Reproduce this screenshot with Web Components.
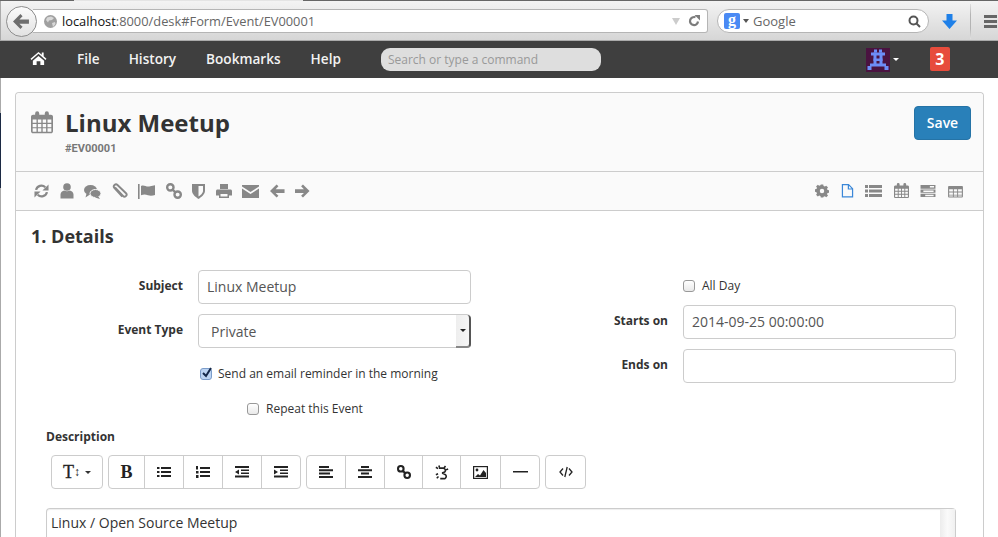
<!DOCTYPE html>
<html><head><meta charset="utf-8">
<style>
html,body{margin:0;padding:0;height:537px;overflow:hidden;background:#fff;font-family:"Open Sans",sans-serif;color:#333}
</style></head><body>
<browser-bar></browser-bar>
<app-nav></app-nav>
<form-page></form-page>
<script>
const ic={
sync:'<g fill="none" stroke="currentColor" stroke-width="2.400"><path d="M2.200 6.800a5.800 5.800 0 0 1 9.800-2.800"/><path d="M13.800 9.200a5.800 5.800 0 0 1-9.800 2.800"/></g><path d="M15.500 1v6.500H9zM.5 15V8.500H7z"/>',
user:'<circle cx="7" cy="4" r="3.800"/><path d="M.5 15.500v-4C.5 9 2.500 8 4.200 7.500c1.300 1 4.300 1 5.600 0C11.500 8 13.500 9 13.500 11.500v4z"/>',
chat:'<ellipse cx="6.500" cy="6" rx="6.500" ry="5"/><path d="M2.500 9.500L1.500 13.500l4.500-3z"/><ellipse cx="11.500" cy="9.500" rx="5.500" ry="4" stroke="#fafafa"/><path d="M14 12l2 3-5-1.500z"/>',
clip:'<path fill="none" stroke="currentColor" stroke-width="1.900" d="M3 4.500l8 8.500a2 2 0 0 0 3-2.800L5.500 2a2.200 2.200 0 0 0-3.200 3l8 8.500"/>',
flag:'<rect x="0" y="0" width="1.600" height="15"/><path d="M3 2c3-1.500 5 1 8 .5l6-1.200v9.700c-2 .8-5 1-7 .3-2.500-.8-4-1-7 0z"/>',
link:'<g fill="none" stroke="currentColor" stroke-width="2.400"><rect x="1.200" y="1.200" width="6.300" height="6.300" rx="3"/><rect x="8.500" y="8.500" width="6.300" height="6.300" rx="3"/><path d="M6 6l4 4"/></g>',
shield:'<path fill-rule="evenodd" d="M0 1h13v7c0 3-3.500 6-6.500 8C3.500 14 0 11 0 8zM6.500 3v10.500c2-1 4.500-3.500 4.500-5.500V3z"/>',
print:'<path fill-rule="evenodd" d="M4 1h8v5H4zM1.500 6.500h13c.8 0 1.500.7 1.500 1.500v4.500h-3V15H3v-2.500H0V8c0-.8.7-1.500 1.500-1.500zM4.500 11v2.500h7V11z"/>',
mail:'<path d="M0 2h17v1.500L8.500 9 0 3.500z"/><path d="M0 5.500L8.500 11 17 5.500V15H0z"/>',
left:'<path d="M7 1l2 2-3 3h9.500v4H6l3 3-2 2-7-7z"/>',
right:'<path d="M8.500 1l-2 2 3 3H0v4h9.500l-3 3 2 2 7-7z"/>',
gear:'<path fill-rule="evenodd" d="M6 0h3l.4 2 1.500.6L12.700 1.500 14.800 3.600 13.600 5.200l.6 1.500 1.800.3v3l-1.800.3-.6 1.500 1.200 1.600-2.100 2.100-1.800-1.100-1.500.6L9 16H6l-.4-1.900-1.500-.6-1.700 1.100L.3 12.500l1.100-1.600-.6-1.500L-1 9V6l1.800-.3.600-1.500L.3 2.600 2.400 .5 4.100 1.600l1.500-.6zM7.500 5.300a2.700 2.700 0 1 0 0 5.400 2.700 2.700 0 0 0 0-5.400z"/>',
file:'<path fill="none" stroke="currentColor" stroke-width="1.400" d="M.7.7h7l4.600 4.600v9.500H.7zM7.500 .7v5h5"/>',
list:'<path d="M0 1h3v3H0zM4 1h13v3H4zM0 5.500h3v3H0zM4 5.500h13v3H4zM0 10h3v3H0zM4 10h13v3H4z"/>',
cal:'<path fill-rule="evenodd" d="M1.500 2.500H3V1.500a1.500 1.500 0 0 1 3 0v1h4v-1a1.500 1.500 0 0 1 3 0v1h1.500c.8 0 1.500.7 1.500 1.500v10.500c0 .8-.7 1.500-1.500 1.500h-13C.7 16 0 15.300 0 14.500V4c0-.8.7-1.500 1.500-1.500zM1.200 6v2.300h2.800V6zM5 6v2.300h2.500V6zM8.500 6v2.300H11V6zM12 6v2.300h2.800V6zM1.200 9.200v2.300h2.800V9.200zM5 9.200v2.300h2.500V9.200zM8.500 9.200v2.300H11V9.200zM12 9.200v2.300h2.800V9.200zM1.200 12.400v2.400h2.800v-2.400zM5 12.400v2.400h2.500v-2.400zM8.500 12.400v2.400H11v-2.400zM12 12.400v2.400h2.800v-2.400z"/>',
rows:'<path fill-rule="evenodd" d="M0 1h16v4H0zM10 2.200v1.600h4.500V2.200zM0 6h16v3.500H0zM3 7v1.500h11V7zM0 10.500h16V14H0zM5 11.500V13h9v-1.500z"/>',
grid:'<path fill-rule="evenodd" d="M1 1h14c.6 0 1 .4 1 1v10.500c0 .6-.4 1-1 1H1c-.6 0-1-.4-1-1V2c0-.6.4-1 1-1zM1.200 4.500v2.400h4V4.500zM6.200 4.500v2.400h3.600V4.500zM10.800 4.500v2.400h4V4.500zM1.200 8v2.400h4V8zM6.200 8v2.400h3.600V8zM10.800 8v2.400h4V8zM1.200 11.300v1.200h4v-1.200zM6.200 11.300v1.200h3.600v-1.200zM10.800 11.300v1.200h4v-1.200z"/>',
home:'<path d="M8.500 1L0 8.300l1 1.200L8.500 3 16 9.500l1-1.200-3-2.600V1.500h-2v2.500zM2.500 10.500L8.500 5.300l6 5.200V15h-4v-4h-4v4h-4z"/>'
};
const svg=(n,w,h,vb,c)=>`<svg width="${w}" height="${h}" viewBox="${vb||'0 0 16 16'}" fill="currentColor" style="display:block;color:${c||'inherit'}">${ic[n]}</svg>`;

customElements.define('browser-bar',class extends HTMLElement{constructor(){super();this.attachShadow({mode:'open'}).innerHTML=`<style>
:host{display:flex;align-items:center;height:41px;box-sizing:border-box;background:linear-gradient(#f3f3f3,#d6d6d6);border-top:1px solid #666;border-bottom:1px solid #aaa;padding:1px 0 0 6px;position:relative;box-shadow:inset 1px 0 #aaa}
.tab{position:absolute;left:74px;width:229px;top:-1px;height:1px;background:#e4e4e4}
.back{width:31px;height:31px;border-radius:50%;background:linear-gradient(#fbfbfb,#e2e2e2);border:1px solid #8e8e8e;box-sizing:border-box;display:flex;align-items:center;justify-content:center;color:#6e6e6e;position:relative;z-index:1;margin-right:-4px;flex:none}
.url{width:675px;height:24px;box-sizing:border-box;background:#fff;border:1px solid #b5b5b5;border-left:0;border-radius:0 3px 3px 0;display:flex;align-items:center;font:12.85px/22px "Open Sans",sans-serif;color:#666;padding-left:11px;flex:none}
.url b{font-weight:400;color:#111}
.globe{width:13px;height:13px;margin-right:5px;flex:none;display:block}
.sp{flex:1}
.tri{width:0;height:0;border:4px solid transparent;border-top:7px solid #ccc;border-bottom:0;margin-right:8px}
.rl{margin-right:7px;color:#7c7c7c}
.g{margin-left:9px;width:212px;height:24px;box-sizing:border-box;flex:none;background:#fff;border:1px solid #b5b5b5;border-radius:12px;display:flex;align-items:center;padding-left:6px;font:13px "Open Sans",sans-serif;color:#666}
.gi{width:16px;height:16px;background:#4a8af4;color:#fff;font:700 16px/13px "Liberation Serif",serif;text-align:center;border-radius:2px;flex:none}
.gc{width:0;height:0;border:3px solid transparent;border-top:4px solid #555;border-bottom:0;margin:0 4px 0 3px}
.mag{margin-right:7px;color:#555}
.dl{margin-left:13px;color:#1f80e8;flex:none}
.div{margin-left:13px;width:1px;height:35px;background:linear-gradient(#e0e0e0,#b4b4b4 30%,#b4b4b4 70%,#e0e0e0);flex:none}
.ham{margin-left:13px;width:13px;flex:none;display:flex;flex-direction:column;gap:2px}
.ham i{display:block;height:3px;background:#666}
</style>
<span class="tab"></span>
<div class="back"><svg width="17" height="15" viewBox="0 0 16 14" fill="currentColor"><path d="M7 0l2 2-3 3h9v4H6l3 3-2 2-7-7z"/></svg></div>
<div class="url"><svg class="globe" viewBox="0 0 13 13"><circle cx="6.500" cy="6.500" r="6.500" fill="#a0a0a0"/><path d="M3 2.500l4-1 3 1.500-2 2-3 .5-1 2-2-2.500zM8 8l3-1 .5 2-2.500 3z" fill="#d8d8d8"/></svg><span><b>localhost</b>:8000/desk#Form/Event/EV00001</span><span class="sp"></span><span class="tri"></span>
<svg class="rl" width="12" height="12" viewBox="0 0 12 12" fill="none" stroke="currentColor" stroke-width="2.200"><path d="M10 6.500A4 4 0 1 1 7.500 2.300"/><path fill="currentColor" stroke="none" d="M6.500 0L12 0v5.500z"/></svg></div>
<div class="g"><span class="gi">g</span><span class="gc"></span><span>Google</span><span class="sp"></span>
<svg class="mag" width="13" height="13" viewBox="0 0 13 13" fill="none" stroke="currentColor" stroke-width="2"><circle cx="5.500" cy="5.500" r="4"/><path d="M8.500 8.500l3.500 3.500"/></svg></div>
<svg class="dl" width="15" height="15" viewBox="0 0 15 15" fill="currentColor"><path d="M4.500 0h6v6.500H15L7.500 15 0 6.500h4.500z"/></svg>
<span class="div"></span><span class="ham"><i></i><i></i><i></i></span>`}});

customElements.define('app-nav',class extends HTMLElement{constructor(){super();this.attachShadow({mode:'open'}).innerHTML=`<style>
:host{display:flex;align-items:center;height:37px;background:#3f3f3f;color:#fff;font:600 13.6px "Open Sans",sans-serif;padding-left:30px}
.home{width:17px;margin-right:30px;color:#fff;margin-top:-2px}
a{margin-right:30px;color:#f2f2f2;margin-top:-2px}
a.first{margin-right:29px}
.s{width:220px;height:23px;margin-left:10px;border-radius:9px;background:#dedede;box-sizing:border-box;padding-left:7px;font:400 12px/23px "Open Sans",sans-serif;color:#999}
.av{margin-left:265px;width:24px;height:24px;background:#4a1340;flex:none}
.c{width:0;height:0;border:3px solid transparent;border-top:3px solid #fff;border-bottom:0;margin:0 31px 0 3px}
.b{width:20px;height:24px;border-radius:2px;background:#e74c3c;font:700 16px/24px "Open Sans",sans-serif;text-align:center;margin-top:-1px}
</style>
<span class="home">${svg('home',17,15,'0 0 17 16')}</span><a class="first">File</a><a>History</a><a>Bookmarks</a><a>Help</a>
<div class="s">Search or type a command</div>
<div class="av"><svg width="24" height="24" viewBox="0 0 24 24" fill="#6d8df7" style="display:block"><rect x="8" y="1.500" width="3" height="3"/><rect x="13" y="1.500" width="3" height="3"/><rect x="5" y="4.500" width="14" height="3"/><rect x="7.500" y="4.500" width="3" height="13"/><rect x="13.500" y="4.500" width="3" height="13"/><rect x="7.500" y="10.500" width="9" height="2.500"/><rect x="4" y="15.500" width="16" height="3"/><rect x="1.500" y="18" width="4" height="4"/><rect x="18.500" y="18" width="4" height="4"/></svg></div><span class="c"></span><div class="b">3</div>`}});

customElements.define('tool-icon',class extends HTMLElement{constructor(){super();const n=this.getAttribute('n'),w=this.getAttribute('w')||16,h=this.getAttribute('h')||16,vb=this.getAttribute('vb');this.attachShadow({mode:'open'}).innerHTML=`<style>:host{display:block;flex:none}</style>${svg(n,w,h,vb)}`}});

customElements.define('form-field',class extends HTMLElement{constructor(){super();this.attachShadow({mode:'open'}).innerHTML=`<style>
:host{display:flex;align-items:flex-start;margin-bottom:10px}
label{width:var(--lw);text-align:right;font:700 12px/17px "Open Sans",sans-serif;color:#333;padding-right:15px;padding-top:7px;box-sizing:content-box;flex:none}
.v{width:273px;height:34px;box-sizing:border-box;border:1px solid #ccc;border-radius:4px;background:#fff;font:14px/32px "Open Sans",sans-serif;color:#555;padding-left:8px;position:relative}
:host([select]) .v{padding-left:12px;line-height:34px;border-radius:4px}
.arrow{display:none}
:host([select]) .arrow{display:block;position:absolute;right:-1px;top:0;bottom:-1px;width:15px;background:linear-gradient(90deg,#eee,#f6f6f6);border-right:2px solid #555;border-bottom:2px solid #888;border-radius:0 4px 4px 0;box-sizing:border-box}
.arrow:after{content:"";position:absolute;left:4px;top:14px;border:3px solid transparent;border-top:3px solid #222;border-bottom:0}
</style><label><slot name="l"></slot></label><div class="v"><slot></slot><span class="arrow"></span></div>`}});

customElements.define('check-row',class extends HTMLElement{constructor(){super();const c=this.hasAttribute('checked');this.attachShadow({mode:'open'}).innerHTML=`<style>
:host{display:flex;align-items:center;font:12px/17px "Open Sans",sans-serif;color:#333}
.b{width:12px;height:12px;border-radius:3px;box-sizing:border-box;margin-right:${c?6:7}px;flex:none;${c?'background:#bcd4f3;border:1px solid #7b9cc9':'background:linear-gradient(#fff,#e9e9e9);border:1px solid #999'};position:relative}
svg{position:absolute;left:0;top:-2px}
</style><span class="b">${c?'<svg width="12" height="12" viewBox="0 0 12 12" fill="none" stroke="#14284a" stroke-width="2"><path d="M2 6l3 3 5-8"/></svg>':''}</span><slot></slot>`}});

customElements.define('rte-bar',class extends HTMLElement{constructor(){super();
const lines=(a)=>`<svg width="14" height="12" viewBox="0 0 14 12" fill="currentColor" style="display:block">${a}</svg>`;
const L={
 ul:lines('<path d="M0 1h2.500v2H0zM0 5h2.500v2H0zM0 9h2.500v2H0zM4 1h10v2H4zM4 5h10v2H4zM4 9h10v2H4z"/>'),
 ol:lines('<path d="M0 0h2v3.500H0zM0 5h2.500v2.500H0zM0 9h2.500v3H0zM4 1h10v2H4zM4 5h10v2H4zM4 9h10v2H4z"/>'),
 od:lines('<path d="M0 0h14v2H0zM6 3.500h8v1.500H6zM6 6.500h8V8H6zM0 9.500h14v2H0zM4 3.500v5L0 6z"/>'),
 id:lines('<path d="M0 0h14v2H0zM6 3.500h8v1.500H6zM6 6.500h8V8H6zM0 9.500h14v2H0zM0 3.500v5L4 6z"/>'),
 al:lines('<path d="M0 0h10v2H0zM0 3.300h14v2H0zM0 6.600h11v2H0zM0 10h14v2H0z"/>'),
 ac:lines('<path d="M3 0h8v2H3zM0 3.300h14v2H0zM3 6.600h8v2H3zM0 10h14v2H0z"/>'),
 ln:`<svg width="14" height="14" viewBox="0 0 16 16" fill="none" stroke="currentColor" stroke-width="2.400" style="display:block"><rect x="1.200" y="1.200" width="6.300" height="6.300" rx="3"/><rect x="8.500" y="8.500" width="6.300" height="6.300" rx="3"/><path d="M6 6l4 4"/></svg>`,
 un:`<svg width="14" height="15" viewBox="0 0 16 17" fill="none" stroke="currentColor" stroke-width="1.800" style="display:block"><path d="M4.500 3.500h4.500a2.600 2.600 0 0 1 2 4.500L8 9M8 9l3 1.500a2.500 2.500 0 0 1-1.500 5H6M1 2.500l2.500 1.500M4.500 .5l.5 2M12 1l-1.500 2M15 4.500l-2.500 1M1 11l2.500-1M2 15l2-2"/></svg>`,
 im:`<svg width="15" height="13" viewBox="0 0 15 13" style="display:block"><rect x=".6" y=".6" width="13.800" height="11.800" fill="#fff" stroke="#222" stroke-width="1.200"/><circle cx="4" cy="4" r="1.400" fill="#222"/><path d="M2 11l3-3 2 1.500L10.500 4 13 7v4z" fill="#222"/></svg>`,
 hr:`<svg width="15" height="2" viewBox="0 0 15 2" style="display:block"><rect width="15" height="1.500" fill="#222"/></svg>`,
 co:`<svg width="14" height="12" viewBox="0 0 14 12" fill="none" stroke="currentColor" stroke-width="1.300" style="display:block"><path d="M4 2.500L1 6l3 3.500M10 2.500L13 6l-3 3.500M8.200 1L5.800 11"/></svg>`
};
const btn=(w,h)=>`<div class="b" style="width:${w}px">${h}</div>`;
this.attachShadow({mode:'open'}).innerHTML=`<style>
:host{display:flex;gap:5px;height:34px;color:#222}
.g{display:flex;border:1px solid #ccc;border-radius:4px;box-sizing:border-box;height:34px}
.b{display:flex;align-items:center;justify-content:center;box-sizing:border-box;height:32px;border-left:1px solid #ccc;flex:none}
.b:first-child{border-left:0}
.st{font:400 18px "Liberation Serif",serif;-webkit-text-stroke:.3px #222}
.bold{font:700 18px "Liberation Serif",serif}
.car{width:0;height:0;border:3px solid transparent;border-top:3px solid #333;border-bottom:0;margin-left:5px}
.t{display:flex;align-items:center}
.ib{font:400 12px "Liberation Sans",sans-serif;margin-left:0;-webkit-text-stroke:0}
</style>
<div class="g">${btn(50,'<span class="t st">T<span class="ib">↕</span><span class="car"></span></span>')}</div>
<div class="g">${btn(35,'<span class="bold">B</span>')}${btn(39,L.ul)}${btn(39,L.ol)}${btn(39,L.od)}${btn(39,L.id)}</div>
<div class="g">${btn(38,L.al)}${btn(39,L.ac)}${btn(38,L.ln)}${btn(38,L.un)}${btn(40,L.im)}${btn(39,L.hr)}</div>
<div class="g">${btn(39,L.co)}</div>`}});

customElements.define('form-page',class extends HTMLElement{constructor(){super();this.attachShadow({mode:'open'}).innerHTML=`<style>
:host{display:block;position:relative;padding:14px 14px 0 15px;height:459px;box-sizing:border-box;overflow:hidden}
.edge{position:absolute;left:0;top:0;width:1px;height:100%;background:#aaa}
.edge:after{content:"";position:absolute;left:0;top:35px;height:75px;width:1px;background:#1c2a44}
.card{border:1px solid #ccc;border-bottom:0;border-radius:4px 4px 0 0;height:460px;box-sizing:border-box}
.head{height:78px;background:#fafafa;border-bottom:1px solid #ccc;border-radius:4px 4px 0 0;display:flex;box-sizing:content-box;padding:0 12px 0 15px;align-items:flex-start}
.ci{margin-top:18px;margin-right:12px;color:#888}
.tt{padding-top:12px}
h1{margin:0;font:700 24px/36px "Open Sans",sans-serif;color:#333}
.id{font:700 11px/14px Roboto,sans-serif;color:#777;margin-top:1px}
.save{margin-left:auto;margin-top:13px;width:57px;height:34px;background:#2980b9;border:1px solid #2573a6;border-radius:4px;box-sizing:border-box;color:#fff;font:600 14px/32px "Open Sans",sans-serif;text-align:center}
.bar{height:38px;background:#fafafa;border-bottom:1px solid #ccc;display:flex;align-items:center;justify-content:space-between;padding:0 20px 0 18px;color:#888}
.tg{display:flex;align-items:center;gap:10.5px}
.tr{display:flex;align-items:center;gap:11.6px}
.body{padding:15px 15px 0 15px}
h2{margin:-2px 0 0;font:700 18px/24px "Open Sans",sans-serif;color:#333}
.cols{display:flex;margin-top:22px}
.c1{width:440px;--lw:152px}
.c2{margin-left:80px;--lw:117px;margin-top:7px}
.chk1{margin:17px 0 0 169px}
.chk2{margin:18px 0 0 216px}
.allday{margin:0 0 11px 132px}
.dl{font:700 12px/17px "Open Sans",sans-serif;color:#333;margin:11px 0 10px 0}
.desc{padding-left:15px}
.ed{width:910px;height:60px;box-sizing:border-box;border:1px solid #ccc;border-bottom:0;border-left:1px solid #ccc;margin-top:19px;border-radius:4px 4px 0 0;font:14px/28px "Open Sans",sans-serif;padding-left:4px;display:flex;justify-content:space-between;color:#333;box-shadow:inset 0 1px 1px #eee}
.scr{width:15px;background:linear-gradient(90deg,#ececec,#fafafa 50%,#f0f0f0);height:100%}
</style>
<div class="edge"></div>
<div class="card">
<div class="head"><span class="ci">${svg('cal',22,24,'0 0 16 17')}</span><div class="tt"><h1>Linux Meetup</h1><div class="id">#EV00001</div></div><div class="save">Save</div></div>
<div class="bar">
<div class="tg">
<tool-icon n="sync" w="15"></tool-icon>
<tool-icon n="user" w="14" h="16" vb="0 0 14 16"></tool-icon>
<tool-icon n="chat" w="17" h="15" vb="0 0 17 15"></tool-icon>
<tool-icon n="clip"></tool-icon>
<tool-icon n="flag" w="17" h="15" vb="0 0 17 15"></tool-icon>
<tool-icon n="link"></tool-icon>
<tool-icon n="shield" w="13" h="16" vb="0 0 13 16"></tool-icon>
<tool-icon n="print"></tool-icon>
<tool-icon n="mail" w="17" h="16" vb="0 0 17 16"></tool-icon>
<tool-icon n="left" w="15"></tool-icon>
<tool-icon n="right" w="15"></tool-icon>
</div>
<div class="tr">
<tool-icon n="gear" w="14" h="14" vb="-1 0 17 16"></tool-icon>
<span style="color:#3a87d8"><tool-icon n="file" w="13" h="14" vb="0 0 13 16"></tool-icon></span>
<tool-icon n="list" w="17" h="14" vb="0 0 17 14"></tool-icon>
<tool-icon n="cal" w="15" h="16" vb="0 0 16 17"></tool-icon>
<tool-icon n="rows" w="16" h="14" vb="0 0 16 15"></tool-icon>
<tool-icon n="grid" w="15" h="13" vb="0 0 16 14"></tool-icon>
</div>
</div>
<div class="body">
<h2>1. Details</h2>
<div class="cols">
<div class="c1">
<form-field><span slot="l">Subject</span>Linux Meetup</form-field>
<form-field select><span slot="l">Event Type</span>Private</form-field>
<check-row checked class="chk1">Send an email reminder in the morning</check-row>
<check-row class="chk2">Repeat this Event</check-row>
</div>
<div class="c2">
<check-row class="allday">All Day</check-row>
<form-field><span slot="l">Starts on</span>2014-09-25 00:00:00</form-field>
<form-field><span slot="l">Ends on</span></form-field>
</div>
</div>
<div class="desc">
<div class="dl">Description</div>
<rte-bar style="margin-left:5px"></rte-bar>
<div class="ed"><span>Linux / Open Source Meetup</span><span class="scr"></span></div>
</div>
</div>
</div>`}});
</script>
</body></html>
